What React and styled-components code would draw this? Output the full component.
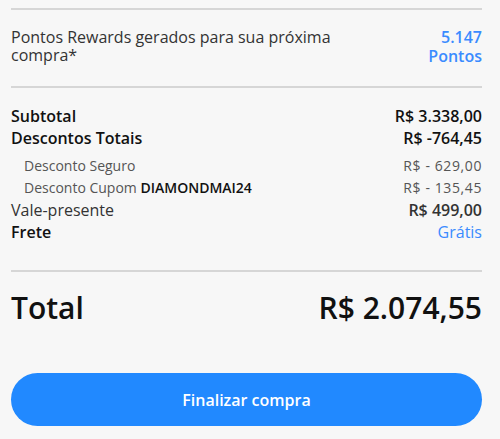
import React from 'react'
import styled, { createGlobalStyle } from 'styled-components'

const Global = createGlobalStyle`
    html, body {
        margin: 0;
        padding: 0;
        background: #f7f7f7;
    }
    body {
        font-family: 'Open Sans', 'Noto Sans', sans-serif;
        color: #1a1a1a;
    }
`

const Summary = styled.div`
    width: 471px;
    margin-left: 11px;
    padding-top: 8px;
`

const Divider = styled.hr`
    border: none;
    border-top: 2px solid #d6d6d6;
    margin: 0;
`

const Rewards = styled.div`
    display: flex;
    justify-content: space-between;
    align-items: flex-start;
    gap: 12px;
    padding: 18px 0 20px;
`

const RewardsText = styled.div`
    width: 345px;
    font-size: 16px;
    line-height: 18px;
    color: #333;
`

const RewardsPoints = styled.div`
    display: flex;
    flex-direction: column;
    align-items: flex-end;
    font-size: 16px;
    line-height: 19px;
    font-weight: 600;
    color: #3a8bff;
`

const Lines = styled.div`
    padding: 17px 0 27px;
`

const Line = styled.div`
    display: flex;
    justify-content: space-between;
    align-items: baseline;
    font-size: ${(p) => (p.small ? '14px' : '16px')};
    line-height: 22px;
    font-weight: ${(p) => (p.bold ? 600 : 400)};
    color: ${(p) => (p.small ? '#555' : p.bold ? '#111' : '#333')};
    padding-left: ${(p) => (p.small ? '13px' : '0')};
    margin-top: ${(p) => (p.gap ? '6px' : '0')};
`

const Value = styled.span`
    font-weight: ${(p) => (p.bold ? 600 : 400)};
    color: ${(p) => (p.blue ? '#3a8bff' : 'inherit')};
    letter-spacing: ${(p) => (p.wide ? '0.6px' : '0')};
`

const Code = styled.b`
    font-weight: 600;
    color: #111;
`

const TotalRow = styled.div`
    display: flex;
    justify-content: space-between;
    align-items: baseline;
    padding: 15px 0 0;
    font-size: 30px;
    line-height: 42px;
    font-weight: 600;
    color: #111;
`

const Button = styled.button`
    display: block;
    width: 100%;
    height: 53px;
    margin-top: 44px;
    border: none;
    border-radius: 27px;
    background: #2189ff;
    color: #fff;
    font-family: inherit;
    font-size: 16px;
    font-weight: 600;
    cursor: pointer;
`

const App = () => {
    return (
        <>
            <Global />
            <Summary>
                <Divider />
                <Rewards>
                    <RewardsText>
                        Pontos Rewards gerados para sua próxima compra*
                    </RewardsText>
                    <RewardsPoints>
                        <span>5.147</span>
                        <span>Pontos</span>
                    </RewardsPoints>
                </Rewards>
                <Divider />
                <Lines>
                    <Line bold>
                        <span>Subtotal</span>
                        <Value bold>R$ 3.338,00</Value>
                    </Line>
                    <Line bold>
                        <span>Descontos Totais</span>
                        <Value bold>R$ -764,45</Value>
                    </Line>
                    <Line small gap>
                        <span>Desconto Seguro</span>
                        <Value wide>R$ - 629,00</Value>
                    </Line>
                    <Line small>
                        <span>
                            Desconto Cupom <Code>DIAMONDMAI24</Code>
                        </span>
                        <Value wide>R$ - 135,45</Value>
                    </Line>
                    <Line>
                        <span>Vale-presente</span>
                        <Value bold>R$ 499,00</Value>
                    </Line>
                    <Line bold>
                        <span>Frete</span>
                        <Value blue>Grátis</Value>
                    </Line>
                </Lines>
                <Divider />
                <TotalRow>
                    <span>Total</span>
                    <span>R$ 2.074,55</span>
                </TotalRow>
                <Button>Finalizar compra</Button>
            </Summary>
        </>
    )
}

export default App
